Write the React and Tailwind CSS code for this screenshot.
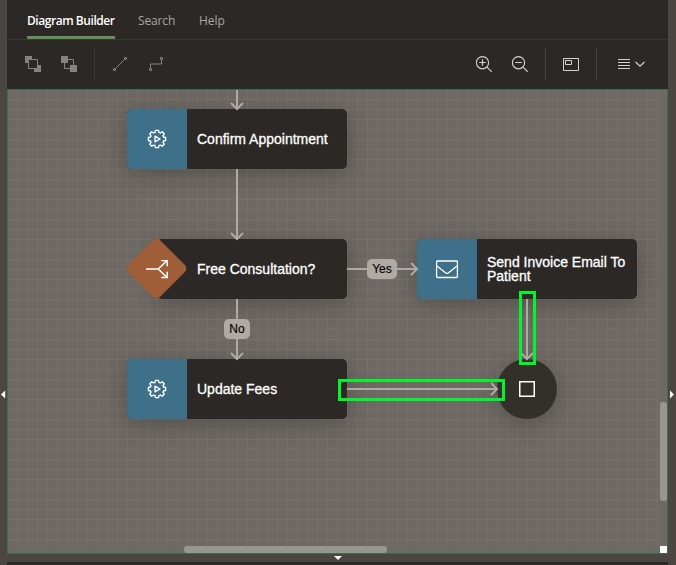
import React from "react";

const nodeFont = "font-['Liberation_Sans',Arial,sans-serif]";

function GearIcon() {
  // Eight rounded teeth around a play triangle
  return (
    <svg width="20" height="20" viewBox="0 0 20 20" fill="none" stroke="#fff" strokeWidth="1.35" strokeLinejoin="round">
      <path d="M8.5 1.4H11.5L12 3.5L13.2 4L15.2 2.8L17.2 4.8L16 6.8L16.5 8L18.6 8.5V11.5L16.5 12L16 13.2L17.2 15.2L15.2 17.2L13.2 16L12 16.5L11.5 18.6H8.5L8 16.5L6.8 16L4.8 17.2L2.8 15.2L4 13.2L3.5 12L1.4 11.5V8.5L3.5 8L4 6.8L2.8 4.8L4.8 2.8L6.8 4L8 3.5Z" />
      <path d="M8 7.2L13 10L8 12.8Z" />
    </svg>
  );
}

function MailIcon() {
  return (
    <svg width="24" height="20" viewBox="0 0 24 20" fill="none" stroke="#fff" strokeWidth="1.3">
      <rect x="1.6" y="2" width="20.8" height="16.5" rx="0.8" />
      <path d="M2 7.1L10.8 13.9Q12 14.8 13.2 13.9L22 7.1" />
    </svg>
  );
}

function Node({ className, icon, children }) {
  return (
    <div className={`absolute flex h-[60px] w-[220px] overflow-hidden rounded-[5px] bg-[#2c2825] shadow-[0_5px_24px_rgba(45,42,36,0.4)] ${className}`}>
      <div className="flex w-[60px] shrink-0 items-center justify-center bg-[#3f7089]">{icon}</div>
      <NodeText>{children}</NodeText>
    </div>
  );
}

function NodeText({ children }) {
  return (
    <div className={`flex flex-1 items-center whitespace-nowrap pl-[10px] text-[14px] leading-[14px] text-white [-webkit-text-stroke:0.3px_white] ${nodeFont}`}>
      <span>{children}</span>
    </div>
  );
}

function Canvas() {
  return (
    <div className="relative h-[465px] w-[661px] overflow-hidden border border-[#38704f] bg-[#6e6964]">
      <div className="absolute top-0 left-0 h-[456px] w-[652px] bg-[linear-gradient(to_right,transparent_9px,#77716c_9px),linear-gradient(to_bottom,transparent_9px,#77716c_9px)] bg-[size:10px_10px]" />

      <Node className="top-[19px] left-[119px]" icon={<GearIcon />}>Confirm Appointment</Node>

      <div className="absolute top-[149px] left-[119px] flex h-[60px] w-[220px]">
        <div className="absolute inset-y-0 right-0 left-[30px] rounded-[5px] bg-[#2c2825] shadow-[0_5px_24px_rgba(45,42,36,0.4)]" />
        <div className="relative flex w-[60px] shrink-0 items-center justify-center">
          <div className="absolute size-[45.2px] rotate-45 rounded-[5px] bg-[#9f5d38]" />
          <svg className="relative" width="24" height="24" viewBox="0 0 24 24" fill="none" stroke="#fff" strokeWidth="1.45">
            <path d="M1 12H13.2L21.8 3.7M13.2 12L21.8 20.3M16.3 3.6H22.2V9.2M22.2 14.8V20.4H16.3" />
          </svg>
        </div>
        <div className="relative flex flex-1"><NodeText>Free Consultation?</NodeText></div>
      </div>

      <Node className="top-[149px] left-[409px]" icon={<MailIcon />}>Send Invoice Email To<br />Patient</Node>
      <Node className="top-[269px] left-[119px]" icon={<GearIcon />}>Update Fees</Node>

      <div className="absolute top-[269px] left-[489px] flex size-[60px] items-center justify-center rounded-full bg-[#33302b] shadow-[0_5px_24px_rgba(45,42,36,0.4)]">
        <svg width="16" height="16" viewBox="0 0 16 16" fill="none" stroke="#fff" strokeWidth="1.5">
          <rect x="0.75" y="0.75" width="14.5" height="14.5" />
        </svg>
      </div>

      <svg className="absolute top-0 left-0" width="659" height="463" viewBox="8 90 659 463" fill="none" stroke="#b0aaa4" strokeWidth="2">
        <path d="M237 90V109M231 103L237 109L243 103" />
        <path d="M237 169V239M231 233L237 239L243 233" />
        <path d="M237 299V359M231 353L237 359L243 353" />
        <path d="M347 269H417M411 263L417 269L411 275" />
        <path d="M347 389H497M491 383L497 389L491 395" />
        <path d="M527 299V359M521 353L527 359L533 353" />
      </svg>

      <div className={`absolute top-[169px] left-[359px] flex h-5 w-[30px] items-center justify-center rounded-[5px] bg-[#b0aaa4] text-[12px] leading-none text-black [-webkit-text-stroke:0.15px_black] ${nodeFont}`}>Yes</div>
      <div className={`absolute top-[229px] left-[216px] flex h-5 w-[26px] items-center justify-center rounded-[5px] bg-[#b0aaa4] text-[12px] leading-none text-black [-webkit-text-stroke:0.15px_black] ${nodeFont}`}>No</div>

      <div className="absolute top-[289px] left-[330px] h-[22px] w-[167px] border-3 border-[#00f52c]" />
      <div className="absolute top-[201px] left-[511px] h-[74px] w-[17px] border-3 border-[#00f52c]" />

      <div className="absolute top-[312px] left-[652px] h-[99px] w-[7px] rounded-[3px] bg-[#9a958f]" />
      <div className="absolute top-[456px] left-[176px] h-[7px] w-[203px] rounded-[3px] bg-[#9a958f]" />
      <div className="absolute top-[456px] left-[652px] size-[7px] bg-white" />
    </div>
  );
}

function Tabs() {
  return (
    <nav className="flex h-10 border-b border-[#3a3633] pl-5 font-['Open_Sans','Noto_Sans',sans-serif] text-[12px] leading-[42px] whitespace-nowrap text-[#aaa6a2]">
      <div className="mr-[23px] h-[39px] w-[88px] border-b-3 border-[#618f58] font-semibold tracking-[-0.45px] text-white">Diagram Builder</div>
      <div className="mr-[24px] w-[37px] tracking-[-0.15px]">Search</div>
      <div>Help</div>
    </nav>
  );
}

function Toolbar() {
  return (
    <div className="flex h-[49px] items-center pb-px pl-[18px] text-[#d5d1cd]">
      <svg width="16" height="16" viewBox="0 0 16 16" fill="#858280">
        <path d="M0 0H7V3H3V7H0ZM13 9H16V16H9V13H13Z" />
        <path d="M3.5 3.5H12.5V12.5H3.5Z" fill="none" stroke="#858280" />
      </svg>
      <svg className="ml-5" width="16" height="16" viewBox="0 0 16 16" fill="#858280">
        <path d="M0 0H7V7H0ZM9 9H16V16H9Z" />
        <path d="M7 3.5H12.5V9M3.5 7V12.5H9" fill="none" stroke="#858280" />
      </svg>
      <div className="ml-[17px] h-8 w-px bg-[#3c3835]" />
      <svg className="ml-[18px]" width="14" height="14" viewBox="0 0 14 14" fill="none" stroke="#858280">
        <path d="M0.5 11.5H2.5V13.5H0.5ZM11.5 0.5H13.5V2.5H11.5ZM2.5 11.5L11.5 2.5" />
      </svg>
      <svg className="ml-[22px]" width="14" height="14" viewBox="0 0 14 14" fill="none" stroke="#858280">
        <path d="M0.5 11.5H2.5V13.5H0.5ZM11.5 0.5H13.5V2.5H11.5ZM1.5 11.5V7H12.5V2.5" />
      </svg>
      <svg className="ml-[313px]" width="17" height="16" viewBox="0 0 17 16" fill="none" stroke="currentColor" strokeWidth="1.15">
        <circle cx="6.5" cy="6.7" r="6.1" />
        <path d="M3.2 6.5H9.8M6.5 3.2V9.8M10.9 11.1L15.7 15.7" />
      </svg>
      <svg className="ml-[19px]" width="17" height="16" viewBox="0 0 17 16" fill="none" stroke="currentColor" strokeWidth="1.15">
        <circle cx="6.5" cy="6.7" r="6.1" />
        <path d="M3.2 6.5H9.8M10.9 11.1L15.7 15.7" />
      </svg>
      <div className="ml-[16px] h-8 w-px bg-[#45413e]" />
      <svg className="ml-[17px]" width="16" height="14" viewBox="0 0 16 14" fill="none" stroke="currentColor">
        <path d="M0.5 1.5H15.5V13.5H0.5ZM2.5 3.5H8.5V7.5H2.5Z" />
      </svg>
      <div className="ml-[17px] h-8 w-px bg-[#45413e]" />
      <svg className="ml-[21px]" width="27" height="12" viewBox="0 0 27 12" fill="none" stroke="currentColor">
        <path d="M0 1.5H12M0 4.5H12M0 7.5H12M0 10.5H12" />
        <path d="M17.6 4L22 8.2L26.4 4" strokeWidth="1.2" />
      </svg>
    </div>
  );
}

export default function App() {
  return (
    <div className="flex h-[565px] w-[676px] overflow-hidden bg-[#4b4642]">
      <div className="flex w-[7px] items-start pt-[390px]">
        <svg className="ml-px" width="5" height="9" viewBox="0 0 5 9"><path d="M4.2 0.5V8.5L0 4.5Z" fill="#fff" /></svg>
      </div>
      <main className="flex w-[661px] flex-col bg-[#2c2825]">
        <Tabs />
        <Toolbar />
        <Canvas />
        <div className="flex h-2 justify-center bg-[#4b4642]">
          <svg className="mt-[2px]" width="8" height="4" viewBox="0 0 8 4"><path d="M0 0H8L4 4Z" fill="#fff" /></svg>
        </div>
      </main>
      <div className="flex w-2 items-start pt-[390px]">
        <svg className="ml-[2px]" width="4" height="9" viewBox="0 0 4 9"><path d="M0 0.5V8.5L4 4.5Z" fill="#fff" /></svg>
      </div>
    </div>
  );
}
